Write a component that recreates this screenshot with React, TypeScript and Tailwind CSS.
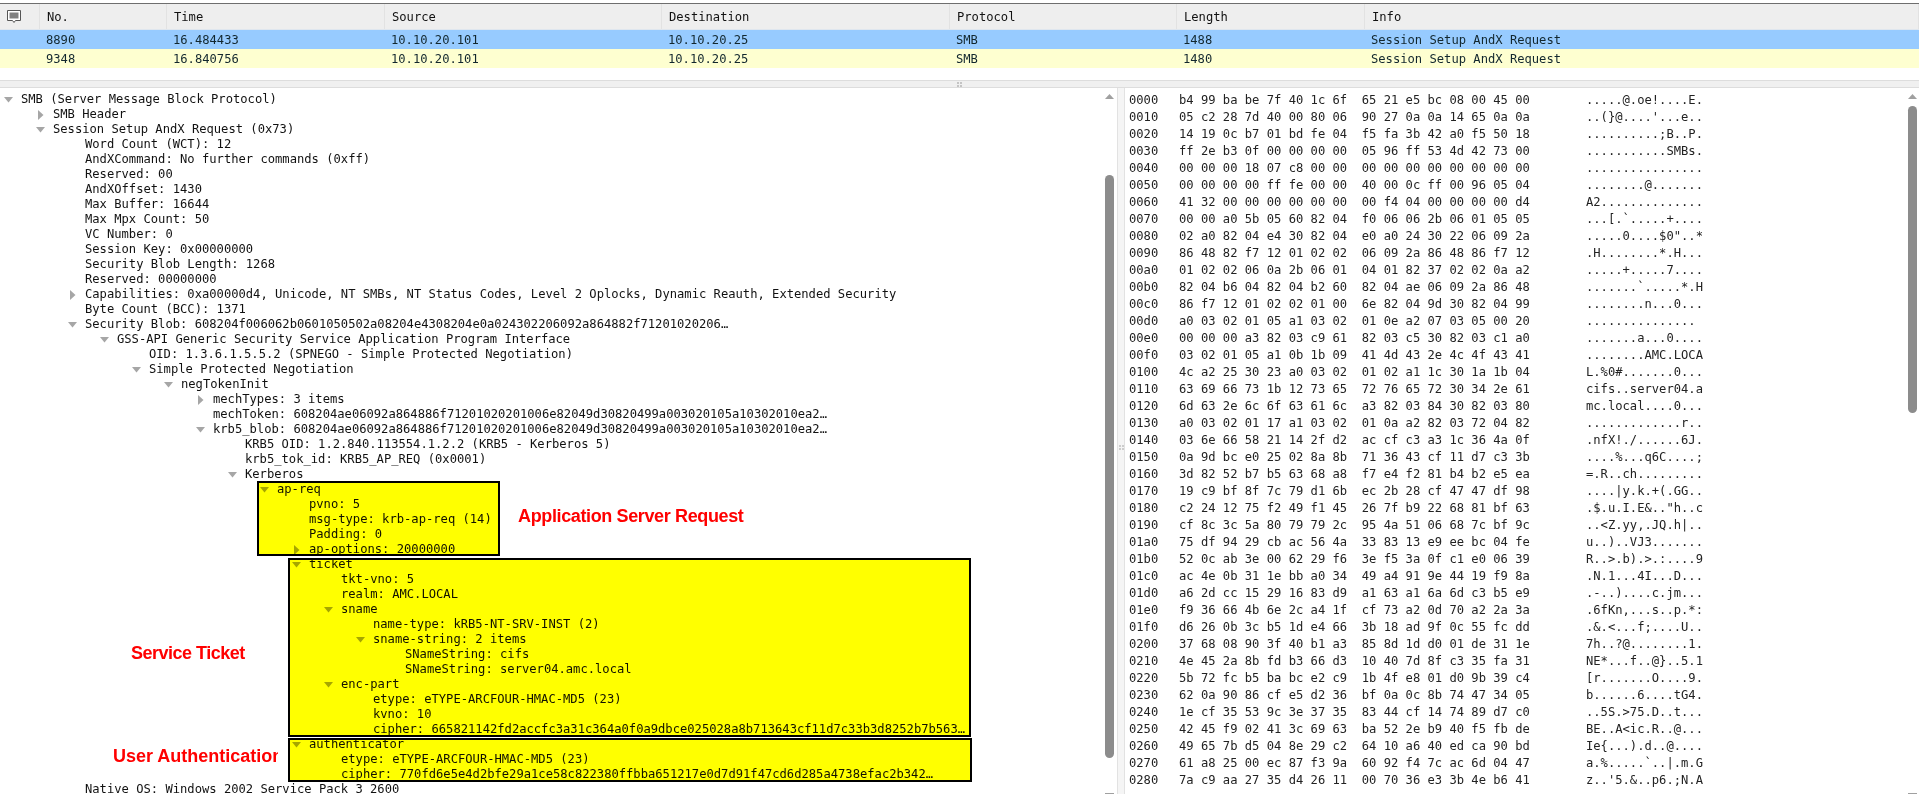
const mono = "font-['DejaVu_Sans_Mono',monospace] text-[12.15px]";

type TreeRow = { depth: number; text: string; arrow?: "open" | "closed" };

const columns = [
  { title: "No.", width: "w-[127px]", value: ["8890", "9348"] },
  { title: "Time", width: "w-[218px]", value: ["16.484433", "16.840756"] },
  { title: "Source", width: "w-[277px]", value: ["10.10.20.101", "10.10.20.101"] },
  { title: "Destination", width: "w-[288px]", value: ["10.10.20.25", "10.10.20.25"] },
  { title: "Protocol", width: "w-[227px]", value: ["SMB", "SMB"] },
  { title: "Length", width: "w-[188px]", value: ["1488", "1480"] },
  { title: "Info", width: "flex-1", value: ["Session Setup AndX Request", "Session Setup AndX Request"] },
];

const tree: TreeRow[] = [
  { depth: 0, text: "SMB (Server Message Block Protocol)", arrow: "open" },
  { depth: 1, text: "SMB Header", arrow: "closed" },
  { depth: 1, text: "Session Setup AndX Request (0x73)", arrow: "open" },
  { depth: 2, text: "Word Count (WCT): 12" },
  { depth: 2, text: "AndXCommand: No further commands (0xff)" },
  { depth: 2, text: "Reserved: 00" },
  { depth: 2, text: "AndXOffset: 1430" },
  { depth: 2, text: "Max Buffer: 16644" },
  { depth: 2, text: "Max Mpx Count: 50" },
  { depth: 2, text: "VC Number: 0" },
  { depth: 2, text: "Session Key: 0x00000000" },
  { depth: 2, text: "Security Blob Length: 1268" },
  { depth: 2, text: "Reserved: 00000000" },
  { depth: 2, text: "Capabilities: 0xa00000d4, Unicode, NT SMBs, NT Status Codes, Level 2 Oplocks, Dynamic Reauth, Extended Security", arrow: "closed" },
  { depth: 2, text: "Byte Count (BCC): 1371" },
  { depth: 2, text: "Security Blob: 608204f006062b0601050502a08204e4308204e0a024302206092a864882f71201020206…", arrow: "open" },
  { depth: 3, text: "GSS-API Generic Security Service Application Program Interface", arrow: "open" },
  { depth: 4, text: "OID: 1.3.6.1.5.5.2 (SPNEGO - Simple Protected Negotiation)" },
  { depth: 4, text: "Simple Protected Negotiation", arrow: "open" },
  { depth: 5, text: "negTokenInit", arrow: "open" },
  { depth: 6, text: "mechTypes: 3 items", arrow: "closed" },
  { depth: 6, text: "mechToken: 608204ae06092a864886f71201020201006e82049d30820499a003020105a10302010ea2…" },
  { depth: 6, text: "krb5_blob: 608204ae06092a864886f71201020201006e82049d30820499a003020105a10302010ea2…", arrow: "open" },
  { depth: 7, text: "KRB5 OID: 1.2.840.113554.1.2.2 (KRB5 - Kerberos 5)" },
  { depth: 7, text: "krb5_tok_id: KRB5_AP_REQ (0x0001)" },
  { depth: 7, text: "Kerberos", arrow: "open" },
  { depth: 8, text: "ap-req", arrow: "open" },
  { depth: 9, text: "pvno: 5" },
  { depth: 9, text: "msg-type: krb-ap-req (14)" },
  { depth: 9, text: "Padding: 0" },
  { depth: 9, text: "ap-options: 20000000", arrow: "closed" },
  { depth: 9, text: "ticket", arrow: "open" },
  { depth: 10, text: "tkt-vno: 5" },
  { depth: 10, text: "realm: AMC.LOCAL" },
  { depth: 10, text: "sname", arrow: "open" },
  { depth: 11, text: "name-type: kRB5-NT-SRV-INST (2)" },
  { depth: 11, text: "sname-string: 2 items", arrow: "open" },
  { depth: 12, text: "SNameString: cifs" },
  { depth: 12, text: "SNameString: server04.amc.local" },
  { depth: 10, text: "enc-part", arrow: "open" },
  { depth: 11, text: "etype: eTYPE-ARCFOUR-HMAC-MD5 (23)" },
  { depth: 11, text: "kvno: 10" },
  { depth: 11, text: "cipher: 665821142fd2accfc3a31c364a0f0a9dbce025028a8b713643cf11d7c33b3d8252b7b563…" },
  { depth: 9, text: "authenticator", arrow: "open" },
  { depth: 10, text: "etype: eTYPE-ARCFOUR-HMAC-MD5 (23)" },
  { depth: 10, text: "cipher: 770fd6e5e4d2bfe29a1ce58c822380ffbba651217e0d7d91f47cd6d285a4738efac2b342…" },
  { depth: 2, text: "Native OS: Windows 2002 Service Pack 3 2600" },
];

const hexRows = [
  ["0000", "b4 99 ba be 7f 40 1c 6f  65 21 e5 bc 08 00 45 00", ".....@.oe!....E."],
  ["0010", "05 c2 28 7d 40 00 80 06  90 27 0a 0a 14 65 0a 0a", "..(}@....'...e.."],
  ["0020", "14 19 0c b7 01 bd fe 04  f5 fa 3b 42 a0 f5 50 18", "..........;B..P."],
  ["0030", "ff 2e b3 0f 00 00 00 00  05 96 ff 53 4d 42 73 00", "...........SMBs."],
  ["0040", "00 00 00 18 07 c8 00 00  00 00 00 00 00 00 00 00", "................"],
  ["0050", "00 00 00 00 ff fe 00 00  40 00 0c ff 00 96 05 04", "........@......."],
  ["0060", "41 32 00 00 00 00 00 00  00 f4 04 00 00 00 00 d4", "A2.............."],
  ["0070", "00 00 a0 5b 05 60 82 04  f0 06 06 2b 06 01 05 05", "...[.`.....+...."],
  ["0080", "02 a0 82 04 e4 30 82 04  e0 a0 24 30 22 06 09 2a", ".....0....$0\"..*"],
  ["0090", "86 48 82 f7 12 01 02 02  06 09 2a 86 48 86 f7 12", ".H........*.H..."],
  ["00a0", "01 02 02 06 0a 2b 06 01  04 01 82 37 02 02 0a a2", ".....+.....7...."],
  ["00b0", "82 04 b6 04 82 04 b2 60  82 04 ae 06 09 2a 86 48", ".......`.....*.H"],
  ["00c0", "86 f7 12 01 02 02 01 00  6e 82 04 9d 30 82 04 99", "........n...0..."],
  ["00d0", "a0 03 02 01 05 a1 03 02  01 0e a2 07 03 05 00 20", "............... "],
  ["00e0", "00 00 00 a3 82 03 c9 61  82 03 c5 30 82 03 c1 a0", ".......a...0...."],
  ["00f0", "03 02 01 05 a1 0b 1b 09  41 4d 43 2e 4c 4f 43 41", "........AMC.LOCA"],
  ["0100", "4c a2 25 30 23 a0 03 02  01 02 a1 1c 30 1a 1b 04", "L.%0#.......0..."],
  ["0110", "63 69 66 73 1b 12 73 65  72 76 65 72 30 34 2e 61", "cifs..server04.a"],
  ["0120", "6d 63 2e 6c 6f 63 61 6c  a3 82 03 84 30 82 03 80", "mc.local....0..."],
  ["0130", "a0 03 02 01 17 a1 03 02  01 0a a2 82 03 72 04 82", ".............r.."],
  ["0140", "03 6e 66 58 21 14 2f d2  ac cf c3 a3 1c 36 4a 0f", ".nfX!./......6J."],
  ["0150", "0a 9d bc e0 25 02 8a 8b  71 36 43 cf 11 d7 c3 3b", "....%...q6C....;"],
  ["0160", "3d 82 52 b7 b5 63 68 a8  f7 e4 f2 81 b4 b2 e5 ea", "=.R..ch........."],
  ["0170", "19 c9 bf 8f 7c 79 d1 6b  ec 2b 28 cf 47 47 df 98", "....|y.k.+(.GG.."],
  ["0180", "c2 24 12 75 f2 49 f1 45  26 7f b9 22 68 81 bf 63", ".$.u.I.E&..\"h..c"],
  ["0190", "cf 8c 3c 5a 80 79 79 2c  95 4a 51 06 68 7c bf 9c", "..<Z.yy,.JQ.h|.."],
  ["01a0", "75 df 94 29 cb ac 56 4a  33 83 13 e9 ee bc 04 fe", "u..)..VJ3......."],
  ["01b0", "52 0c ab 3e 00 62 29 f6  3e f5 3a 0f c1 e0 06 39", "R..>.b).>.:....9"],
  ["01c0", "ac 4e 0b 31 1e bb a0 34  49 a4 91 9e 44 19 f9 8a", ".N.1...4I...D..."],
  ["01d0", "a6 2d cc 15 29 16 83 d9  a1 63 a1 6a 6d c3 b5 e9", ".-..)....c.jm..."],
  ["01e0", "f9 36 66 4b 6e 2c a4 1f  cf 73 a2 0d 70 a2 2a 3a", ".6fKn,...s..p.*:"],
  ["01f0", "d6 26 0b 3c b5 1d e4 66  3b 18 ad 9f 0c 55 fc dd", ".&.<...f;....U.."],
  ["0200", "37 68 08 90 3f 40 b1 a3  85 8d 1d d0 01 de 31 1e", "7h..?@........1."],
  ["0210", "4e 45 2a 8b fd b3 66 d3  10 40 7d 8f c3 35 fa 31", "NE*...f..@}..5.1"],
  ["0220", "5b 72 fc b5 ba bc e2 c9  1b 4f e8 01 d0 9b 39 c4", "[r.......O....9."],
  ["0230", "62 0a 90 86 cf e5 d2 36  bf 0a 0c 8b 74 47 34 05", "b......6....tG4."],
  ["0240", "1e cf 35 53 9c 3e 37 35  83 44 cf 14 74 89 d7 c0", "..5S.>75.D..t..."],
  ["0250", "42 45 f9 02 41 3c 69 63  ba 52 2e b9 40 f5 fb de", "BE..A<ic.R..@..."],
  ["0260", "49 65 7b d5 04 8e 29 c2  64 10 a6 40 ed ca 90 bd", "Ie{...).d..@...."],
  ["0270", "61 a8 25 00 ec 87 f3 9a  60 92 f4 7c ac 6d 04 47", "a.%.....`..|.m.G"],
  ["0280", "7a c9 aa 27 35 d4 26 11  00 70 36 e3 3b 4e b6 41", "z..'5.&..p6.;N.A"],
];

const Expander = ({ kind }: { kind: "open" | "closed" }) =>
  kind === "open" ? (
    <svg width="10" height="6" viewBox="0 0 10 6" className="absolute left-[-17px] top-[5px]">
      <path d="M0 0H9L4.5 5.5Z" fill="#a6a6a6" />
    </svg>
  ) : (
    <svg width="6" height="10" viewBox="0 0 6 10" className="absolute left-[-15px] top-[3px]">
      <path d="M0 0V10L5.5 5Z" fill="#a6a6a6" />
    </svg>
  );

const Scrollbar = ({ thumb, tail }: { thumb: string; tail: string }) => (
  <div className="flex w-[9px] shrink-0 flex-col items-center">
    <svg width="9" height="5" viewBox="0 0 9 5" className="mt-[6px] shrink-0">
      <path d="M0 5L4.5 0L9 5Z" fill="#a0a0a0" />
    </svg>
    <div className={`w-[9px] shrink-0 rounded-full bg-[#8c8c8c] ${thumb}`} />
    <div className={`h-[1px] w-[9px] shrink-0 bg-[#a0a0a0] ${tail}`} />
  </div>
);

const Annotation = ({ className, children }: { className: string; children: string }) => (
  <div className={`absolute whitespace-nowrap font-['Liberation_Sans',sans-serif] text-[18px] leading-[22px] font-bold text-[#ff0000] ${className}`}>
    {children}
  </div>
);

export default function App() {
  return (
    <div className={`h-[794px] w-[1919px] overflow-hidden bg-white text-[#111111] ${mono}`}>
      <div className="h-[3px]" />
      {/* packet list */}
      <div className="flex h-[27px] border-t border-[#6e6e6e] border-b border-b-[#dfe6ee] bg-[#eeeeee] leading-[26px]">
        <div className="flex w-[40px] shrink-0 items-center justify-center border-r border-[#e2e2e2] pr-[12px]">
          <svg width="14" height="13" viewBox="0 0 14 13">
            <path d="M0.5 0.5H13.5V10.5H8.5L7 12.5L5.5 10.5H0.5Z" fill="#ffffff" stroke="#555555" />
            <path d="M2.5 2.5H11.5V8.5H2.5Z" fill="#808080" />
          </svg>
        </div>
        {columns.map((col) => (
          <div key={col.title} className={`${col.width} shrink-0 border-r border-[#e2e2e2] pl-[7px]`}>
            {col.title}
          </div>
        ))}
      </div>
      {[0, 1].map((row) => (
        <div
          key={row}
          className={`flex h-[19px] pl-[40px] leading-[20px] text-[#12272e] ${row === 0 ? "bg-[#97cbff]" : "bg-[#feffd0]"}`}
        >
          {columns.map((col) => (
            <div key={col.title} className={`${col.width} shrink-0 pl-[6px]`}>
              {col.value[row]}
            </div>
          ))}
        </div>
      ))}
      <div className="h-[12px]" />
      {/* splitter */}
      <div className="flex h-[8px] items-center justify-center border-y border-[#dddddd] bg-[#f0f0f0]">
        <div className="grid grid-cols-2 gap-[1px]">
          {[0, 1, 2, 3].map((dot) => (
            <div key={dot} className="h-[2px] w-[2px] bg-[#c4c4c4]" />
          ))}
        </div>
      </div>
      <div className="flex h-[706px]">
        {/* protocol tree */}
        <div className="relative flex w-[1117px] shrink-0 justify-between pr-[3px]">
          <div className="min-w-0 pt-[4px]">
            {tree.map((row, i) => (
              <div key={i} className="h-[15px] whitespace-nowrap leading-[15px]" style={{ paddingLeft: 21 + row.depth * 32 }}>
                <span className="relative">
                  {row.arrow && <Expander kind={row.arrow} />}
                  {row.text}
                </span>
              </div>
            ))}
          </div>
          <Scrollbar thumb="mt-[76px] h-[583px]" tail="mt-[35px]" />
          <div className="absolute top-[393px] left-[257px] h-[75px] w-[243px] border-2 border-black bg-[#ffff00] mix-blend-multiply" />
          <div className="absolute top-[470px] left-[288px] h-[179px] w-[683px] border-2 border-black bg-[#ffff00] mix-blend-multiply" />
          <div className="absolute top-[650px] left-[288px] h-[44px] w-[684px] border-2 border-black bg-[#ffff00] mix-blend-multiply" />
          <Annotation className="top-[417px] left-[518px] tracking-[-0.37px]">Application Server Request</Annotation>
          <Annotation className="top-[554px] left-[131px] tracking-[-0.5px]">Service Ticket</Annotation>
          <Annotation className="top-[657px] left-[113px] w-[165px] overflow-hidden tracking-[0px]">User Authentication</Annotation>
        </div>
        {/* vertical splitter */}
        <div className="flex w-[8px] shrink-0 items-center justify-center border-x border-[#e2e2e2] bg-[#f5f5f5] pt-[12px]">
          <div className="grid grid-cols-2 gap-[1px]">
            {[0, 1, 2, 3].map((dot) => (
              <div key={dot} className="h-[2px] w-[2px] bg-[#cccccc]" />
            ))}
          </div>
        </div>
        {/* packet bytes */}
        <div className="flex flex-1 justify-between pl-[4px] pr-[2px]">
          <div className="pt-[4px]">
            {hexRows.map(([offset, bytes, ascii]) => (
              <div key={offset} className="flex h-[17px] whitespace-pre leading-[17px] text-[#222222]">
                <div className="w-[50px]">{offset}</div>
                <div className="w-[407px]">{bytes}</div>
                <div>{ascii}</div>
              </div>
            ))}
          </div>
          <Scrollbar thumb="mt-[7px] h-[307px]" tail="mt-[380px]" />
        </div>
      </div>
    </div>
  );
}
